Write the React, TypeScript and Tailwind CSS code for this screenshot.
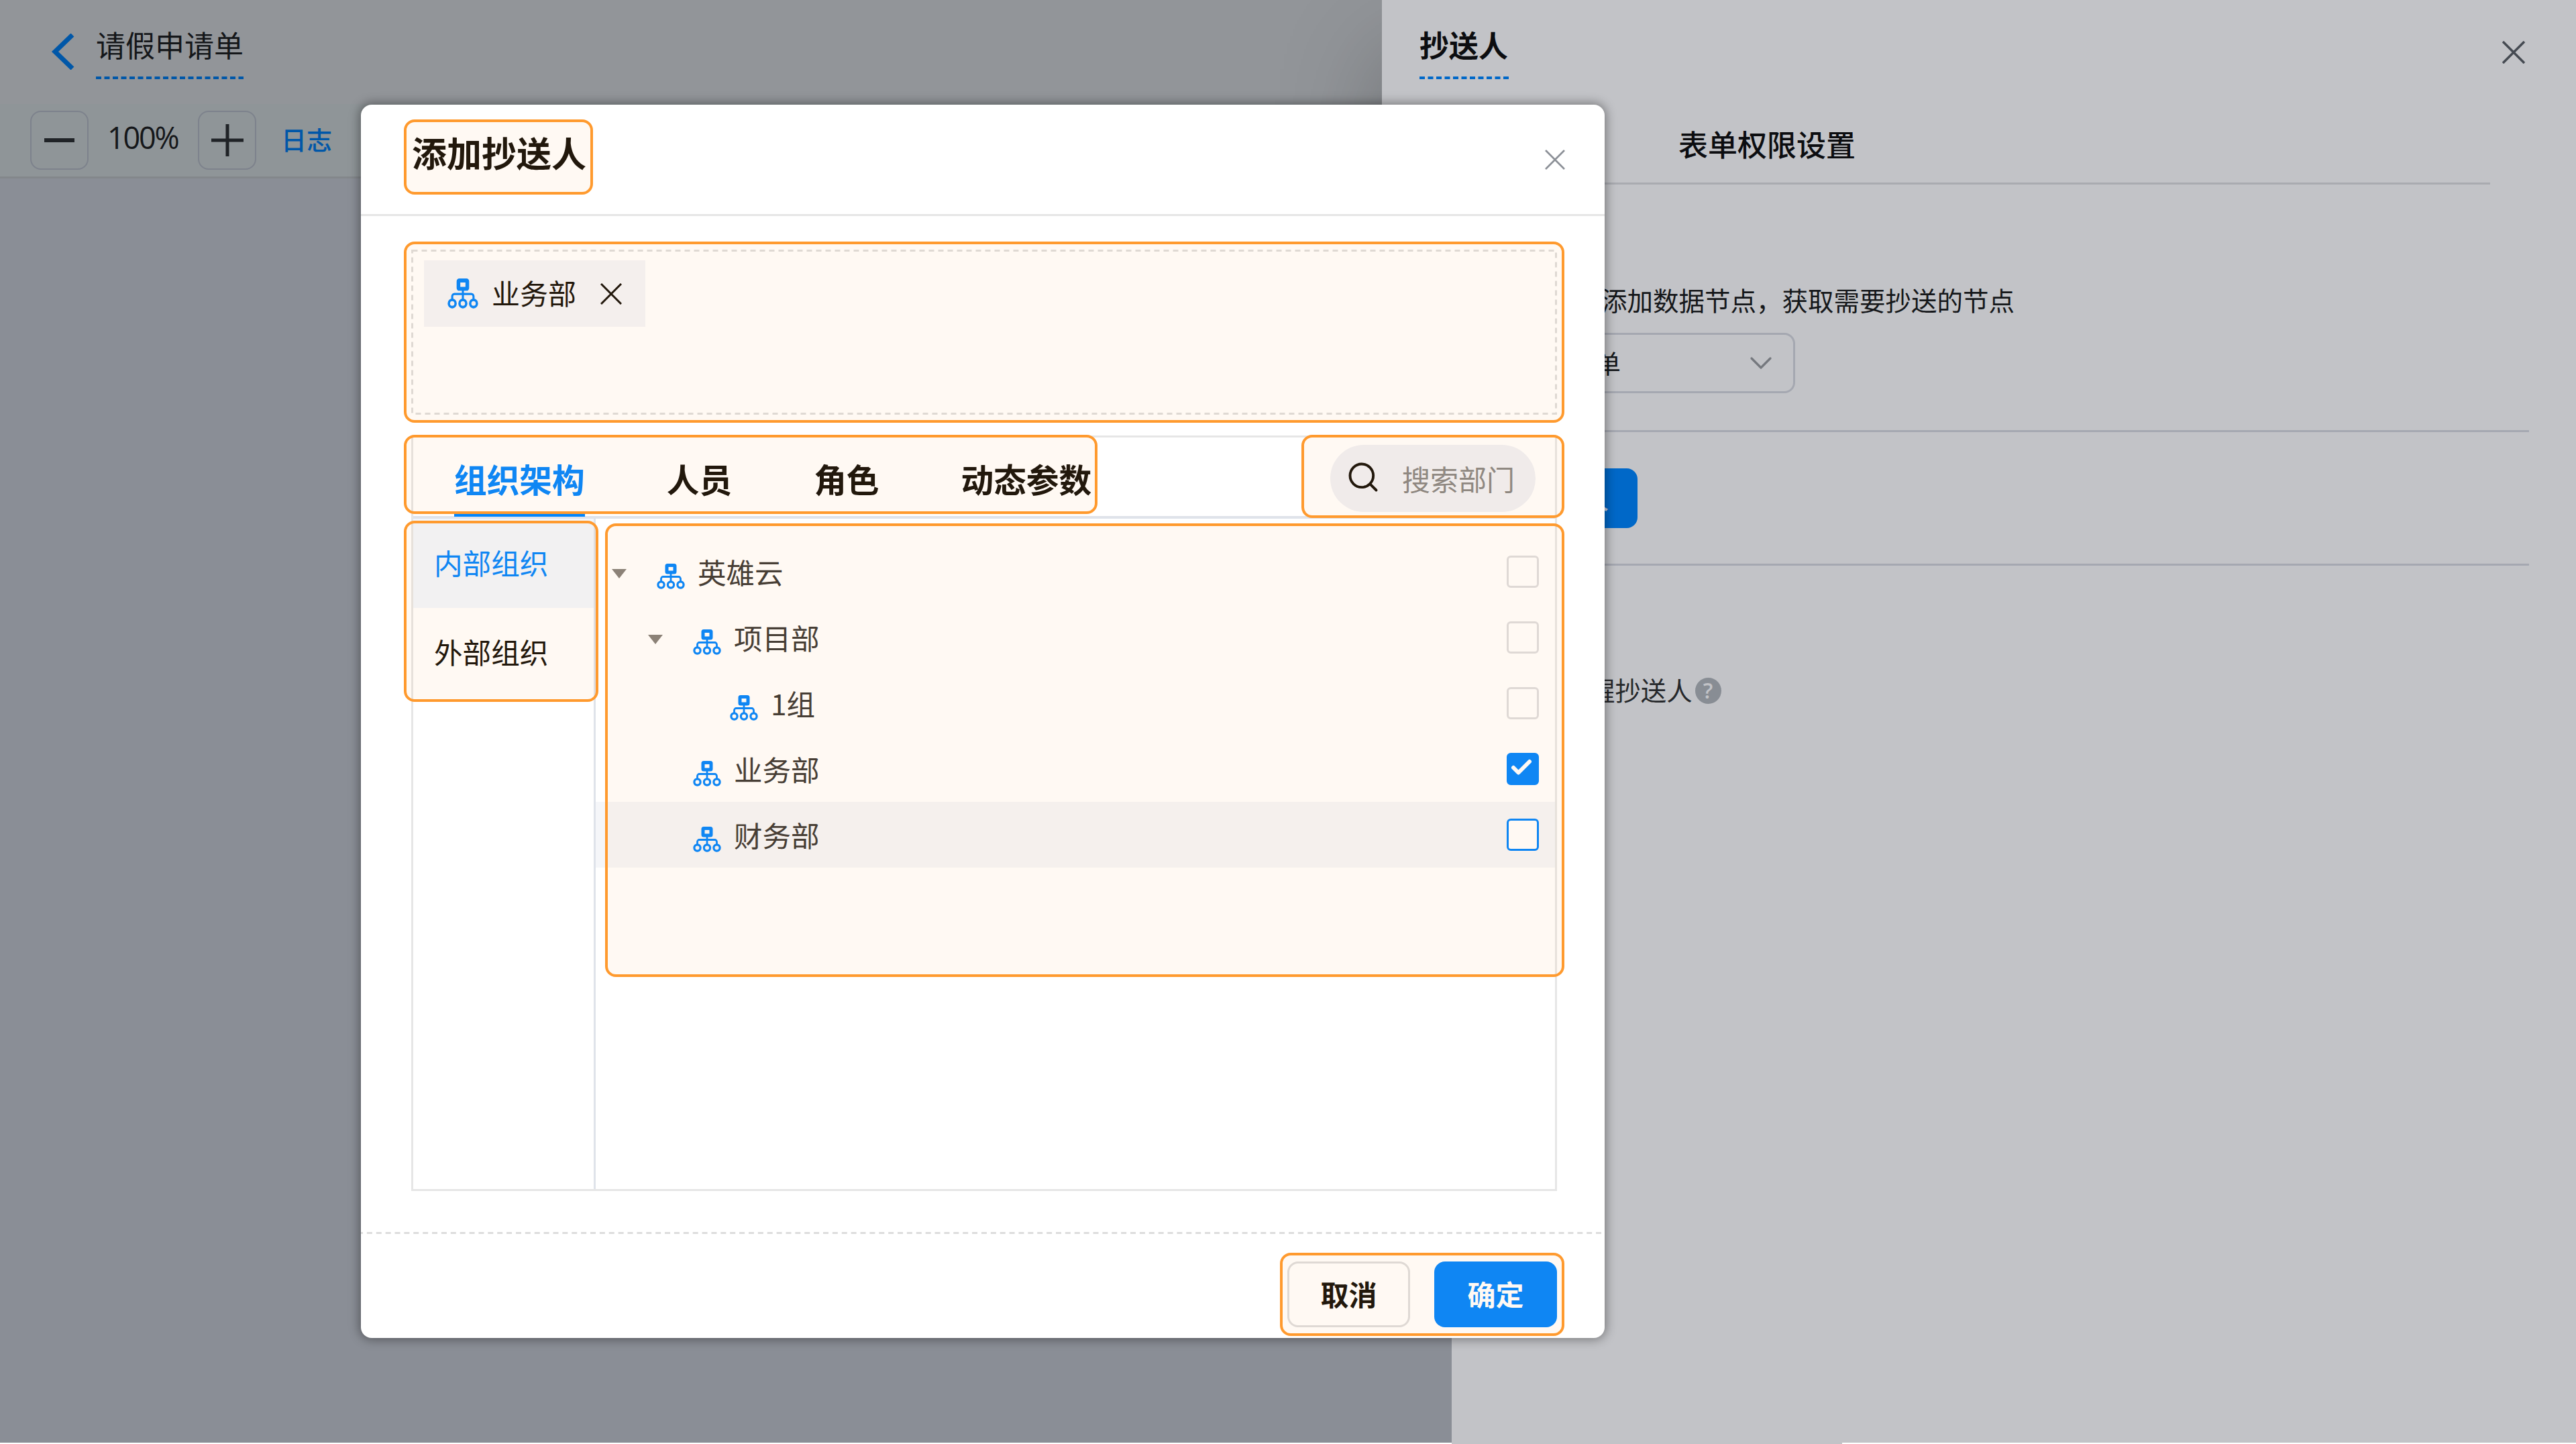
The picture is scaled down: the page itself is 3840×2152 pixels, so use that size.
import { Check, ChevronDown, Search } from "lucide-react";

const TABS = ["组织架构", "人员", "角色", "动态参数"];
const SCOPES = ["内部组织", "外部组织"];

interface TreeNode {
  name: string;
  indent: string;
  expanded?: boolean;
  checked?: boolean;
  hovered?: boolean;
}

const NODES: TreeNode[] = [
  { name: "英雄云", indent: "pl-[24px]", expanded: true },
  { name: "项目部", indent: "pl-[78px]", expanded: true },
  { name: "1组", indent: "pl-[133px]" },
  { name: "业务部", indent: "pl-[78px]", checked: true },
  { name: "财务部", indent: "pl-[78px]", hovered: true },
];

function OrgIcon({ className }: { className: string }) {
  return (
    <svg viewBox="0 0 42 38" fill="none" stroke="#0085ff" className={className} preserveAspectRatio="none">
      <rect x="15" y="2.5" width="12" height="10.5" strokeWidth="5" rx="1" />
      <path d="M21 14v12M6.5 27v-4.5a3 3 0 0 1 3-3h23a3 3 0 0 1 3 3V27" strokeWidth="2.8" />
      <circle cx="6.5" cy="31.5" r="4.6" strokeWidth="3.2" />
      <circle cx="21" cy="31.5" r="4.6" strokeWidth="3.2" />
      <circle cx="35.5" cy="31.5" r="4.6" strokeWidth="3.2" />
    </svg>
  );
}

// Orange guide frame laid over the area it points at
function Highlight({ className }: { className: string }) {
  return (
    <div
      className={`pointer-events-none absolute rounded-[16px] border-4 border-[#ff9a2e] bg-[#ff9a2e]/6 bg-clip-padding ${className}`}
    />
  );
}

function Canvas() {
  return (
    <div className="flex h-[2150px] flex-col bg-[#8a8e96]">
      <div className="flex h-[155px] items-start bg-[#929599] pl-[75px]">
        <svg viewBox="0 0 36 54" fill="none" stroke="#0057a8" strokeWidth="7" className="mt-[50px] h-[54px] w-9">
          <path d="M33 2 7 27l26 25" />
        </svg>
        <div className="ml-[32px] mt-[34px] h-[82px] w-[220px] text-[44px] leading-[64px] text-[#15171a]">
          请假申请单
          <svg viewBox="0 0 220 4" className="mt-[16px] h-1 w-[220px]">
            <path d="M0 2h220" stroke="#0057a8" strokeWidth="4" strokeDasharray="8 4.5" />
          </svg>
        </div>
      </div>
      <div className="flex h-[111px] items-center border-b-[3px] border-[#83878b] bg-[#8f9598] pl-[45px]">
        <div className="flex h-[88px] w-[87px] items-center justify-center rounded-[16px] border-2 border-[#7d828c]">
          <div className="h-[6px] w-[45px] bg-[#202327]" />
        </div>
        <div className="-mt-[8px] ml-[28px] w-[108px] whitespace-nowrap font-['Open_Sans',sans-serif] text-[45px] leading-[56px] tracking-[-2.2px] text-[#15171a]">
          100%
        </div>
        <div className="ml-[27px] flex h-[88px] w-[87px] items-center justify-center rounded-[16px] border-2 border-[#7d828c]">
          <svg viewBox="0 0 48 48" stroke="#202327" strokeWidth="5" className="size-12">
            <path d="M24 0v48M0 24h48" />
          </svg>
        </div>
        <div className="-mt-[6px] ml-[37px] text-[38px] font-medium text-[#0057a8]">日志</div>
      </div>
    </div>
  );
}

function Drawer() {
  return (
    <div className="absolute right-0 top-0 h-[2152px] w-[1780px]">
      <div className="absolute left-0 top-0 h-[1900px] w-[1780px] bg-[#c2c3c7] shadow-[0_80px_140px_0_rgba(0,0,0,0.26)] [clip-path:inset(0_0_0_-300px)]" />
      <div className="absolute bottom-[2px] right-0 h-[300px] w-[1676px] bg-[#c2c3c7]" />
      <div className="absolute bottom-0 left-[104px] h-[2px] w-[582px] bg-[#c2c3c7]" />
      <div className="relative flex flex-col">
        <div className="flex h-[156px] justify-between pl-[56px] pr-[76px]">
          <div className="mt-[34px] w-[134px] text-[44px] font-bold leading-[64px] text-[#0c0d10]">
            抄送人
            <svg viewBox="0 0 134 4" className="mt-[16px] h-1 w-[134px]">
              <path d="M0 2h133" stroke="#0068c8" strokeWidth="4" strokeDasharray="8 4.5" />
            </svg>
          </div>
          <svg viewBox="0 0 34 34" stroke="#454a52" strokeWidth="3.5" className="mt-[61px] size-[34px]">
            <path d="M1 1l32 32M33 1 1 33" />
          </svg>
        </div>
        <div className="mr-[128px] flex h-[119px] items-center border-b-[3px] border-[#a9abb0] pl-[442px] text-[44px] font-medium text-[#0c0d10]">
          表单权限设置
        </div>
        <div className="mr-[70px] h-[369px] border-b-[3px] border-[#a5a8b1] pt-[143px]">
          <div className="pl-[327px] text-[38.5px] leading-[56px] text-[#15171a]">添加数据节点，获取需要抄送的节点</div>
          <div className="mt-[22px] flex h-[90px] w-[616px] items-center justify-between rounded-[16px] border-[3px] border-[#a5a8b1] pl-[315px] pr-[20px] text-[38px] text-[#15171a]">
            <span className="-mt-[4px]">单</span>
            <ChevronDown className="size-[56px] text-[#75787e]" strokeWidth={1.4} />
          </div>
        </div>
        <div className="mr-[70px] h-[199px] border-b-[3px] border-[#a5a8b1] pt-[54px]">
          <div className="flex h-[89px] w-[381px] items-center justify-end rounded-[16px] bg-[#0068c8] pr-[43px] text-[38px] font-medium text-[#c9d0da]">
            人
          </div>
        </div>
        <div className="mt-[160px] flex items-center pl-[309px] text-[38.4px] leading-[56px] text-[#26282b]">
          <span className="-mt-[4px]">醒抄送人</span>
          <span className="ml-[4px] flex size-[39px] items-center justify-center rounded-full bg-[#888d94] font-['Open_Sans',sans-serif] text-[32px] font-semibold leading-none text-[#c2c3c7]">
            ?
          </span>
        </div>
      </div>
    </div>
  );
}

function TreeRow({ node }: { node: TreeNode }) {
  return (
    <div
      className={`flex h-[98px] items-center pr-[24px] ${node.indent} ${node.hovered ? "bg-[#f5f6f9]" : ""}`}
    >
      {node.expanded ? (
        <svg viewBox="0 0 22 14" fill="#85817c" className="mr-[45px] mt-[5px] h-[14px] w-[22px]">
          <path d="M0 0h22L11 14z" />
        </svg>
      ) : (
        <div className="mr-[45px] w-[22px]" />
      )}
      <OrgIcon className="mt-[14px] h-[38px] w-[42px]" />
      <span className="ml-[19px] text-[42.5px] text-[#3c3936]">{node.name}</span>
      <div
        className={`ml-auto flex size-[48px] items-center rounded-[6px] border-[3px] ${
          node.checked
            ? "border-[#0085ff] bg-[#0085ff]"
            : node.hovered
              ? "border-[#0085ff] bg-white"
              : "border-[#dedde0]"
        }`}
      >
        {node.checked && <Check className="mb-[4px] ml-px size-[36px] text-white" strokeWidth={4} />}
      </div>
    </div>
  );
}

function AddCcDialog() {
  return (
    <div className="absolute left-[538px] top-[156px] flex h-[1838px] w-[1854px] flex-col rounded-[16px] bg-white shadow-[0_0_16px_2px_rgba(0,0,0,0.4)]">
      <div className="flex h-[166px] items-center justify-between border-b-[3px] border-[#e6e6e6] pl-[76px] pr-[59px]">
        <h2 className="mb-[22px] text-[52px] font-bold text-[#15100a]">添加抄送人</h2>
        <svg viewBox="0 0 30 30" stroke="#8b8f96" strokeWidth="2.6" className="size-[30px]">
          <path d="M1 1l28 28M29 1 1 29" />
        </svg>
        <Highlight className="left-[64px] top-[22px] h-[112px] w-[282px]" />
      </div>

      <div className="relative ml-[75px] mr-[71px] mt-[50px] h-[247px] px-[19px] py-[16px]">
        <svg className="absolute inset-0 h-full w-full" fill="none">
          <rect x="1.5" y="1.5" width="1705" height="243" stroke="#dddddd" strokeWidth="3" strokeDasharray="8 6" />
        </svg>
        <div className="flex h-[99px] w-[330px] items-center bg-[#f4f5f9] pl-[35px] text-[42px] text-[#15100a]">
          <OrgIcon className="h-[45px] w-[46px]" />
          <span className="-mt-[4px] ml-[20px]">业务部</span>
          <svg viewBox="0 0 32 32" stroke="#15100a" strokeWidth="3" className="ml-[36px] size-8">
            <path d="M1 1l30 30M31 1 1 31" />
          </svg>
        </div>
        <Highlight className="-inset-x-[11px] -bottom-[11px] -top-[12px]" />
      </div>

      <div className="relative ml-[75px] mr-[71px] mt-[30px] flex h-[1126px] flex-col border-[3px] border-[#e6e6e6]">
        <div className="relative flex h-[121px] items-center border-b-4 border-[#dfe3ea] pl-[61px] pr-[29px]">
          <div className="flex h-full gap-[122px]">
            {TABS.map((tab, i) => (
              <div
                key={tab}
                className={`flex h-[118px] items-center border-b-4 pt-[9px] text-[48.7px] font-bold leading-none ${
                  i === 0 ? "border-[#0085ff] text-[#0085ff]" : "border-transparent text-[#15100a]"
                }`}
              >
                {tab}
              </div>
            ))}
          </div>
          <div className="ml-auto mt-[4px] flex h-[100px] w-[306px] items-center rounded-full bg-[#f0f1f6] pl-[23px] pr-[33px]">
            <Search className="-mt-[4px] size-[52px] shrink-0 text-[#15100a]" strokeWidth={1.8} />
            <div className="ml-[32px] overflow-hidden whitespace-nowrap text-[42px] text-[#898786]">搜索部门</div>
          </div>
          <Highlight className="-left-[14px] -top-[4px] h-[118px] w-[1034px]" />
          <Highlight className="-right-[14px] -top-[4px] h-[124px] w-[392px]" />
        </div>

        <div className="relative flex flex-1">
          <div className="w-[272px] border-r-[3px] border-[#dfe3ea]">
            {SCOPES.map((scope, i) => (
              <div
                key={scope}
                className={`flex h-[133px] items-center pb-[3px] pl-[31px] text-[42.6px] ${
                  i === 0 ? "bg-[#f2f7fe] text-[#0085ff]" : "text-[#15100a]"
                }`}
              >
                {scope}
              </div>
            ))}
          </div>
          <div className="flex-1 pt-[30px]">
            {NODES.map((node) => (
              <TreeRow key={node.name} node={node} />
            ))}
          </div>
          <Highlight className="-left-[14px] top-[3px] h-[270px] w-[290px]" />
          <Highlight className="-right-[14px] top-[7px] h-[676px] w-[1430px]" />
        </div>
      </div>

      <svg viewBox="0 0 1854 3" className="mt-[61px] h-[3px] w-[1854px]">
        <path d="M-5 1.5h1855" stroke="#dddddd" strokeWidth="3" strokeDasharray="8 5.88" />
      </svg>
      <div className="flex flex-1 items-start justify-end pr-[71px] pt-[41px]">
        <div className="relative flex gap-[36px] text-[42px] font-bold">
          <button className="h-[98px] w-[183px] rounded-[16px] border-[3px] border-[#dddddf] pb-[4px] text-[#15100a]">
            取消
          </button>
          <button className="h-[98px] w-[183px] rounded-[16px] bg-[#0085ff] pb-[4px] text-white">确定</button>
          <Highlight className="-bottom-[13px] -left-[11px] -right-[11px] -top-[13px]" />
        </div>
      </div>
    </div>
  );
}

export default function App() {
  return (
    <div className="relative h-[2152px] w-[3840px] overflow-hidden bg-white font-['Noto_Sans_CJK_SC',sans-serif]">
      <Canvas />
      <Drawer />
      <AddCcDialog />
    </div>
  );
}
